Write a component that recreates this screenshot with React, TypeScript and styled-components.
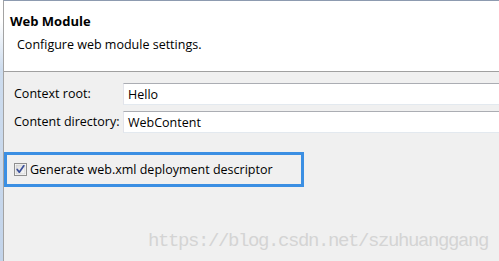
import styled, { createGlobalStyle } from "styled-components";

const GlobalStyle = createGlobalStyle`
  html, body {
    margin: 0;
    padding: 0;
    background: #f0f0f0;
    overflow: hidden;
  }
  * {
    box-sizing: border-box;
  }
`;

const Page = styled.div`
  position: relative;
  display: flex;
  width: 499px;
  height: 261px;
  overflow: hidden;
  font-family: "Open Sans", "Noto Sans", sans-serif;
  font-size: 12.5px;
  color: #000;
`;

const EdgeStrip = styled.div`
  width: 3px;
  flex-shrink: 0;
  background: linear-gradient(to bottom, #ffffff 0, #ffffff 20px, #cddcee 70px, #c3d4ea 100%);
`;

const Panel = styled.div`
  flex: 1;
  display: flex;
  flex-direction: column;
  border-left: 1px solid #a3a3a3;
  border-top: 1px solid #8d9bb0;
  background: #f0f0f0;
`;

const Header = styled.div`
  height: 71px;
  display: flex;
  flex-direction: column;
  padding: 12px 0 0 6px;
  background: #ffffff;
  border-bottom: 1px solid #a0a0a0;
`;

const Title = styled.div`
  font-size: 13px;
  font-weight: 700;
  line-height: 16px;
`;

const Description = styled.div`
  margin-top: 8px;
  padding-left: 7px;
  line-height: 16px;
`;

const Body = styled.div`
  display: flex;
  flex-direction: column;
  padding-top: 11px;
`;

const Form = styled.div`
  display: grid;
  grid-template-columns: 109px 1fr;
  grid-auto-rows: 22px;
  row-gap: 6px;
  padding-left: 10px;
  align-items: center;
`;

const Label = styled.label`
  line-height: 16px;
`;

const TextInput = styled.div`
  height: 22px;
  display: flex;
  align-items: center;
  padding-left: 4px;
  background: #ffffff;
  border-top: 1px solid #abadb3;
  border-left: 1px solid #e2e3ea;
  border-bottom: 1px solid #e3e9ef;
`;

const Highlight = styled.div`
  margin-top: 19px;
  width: 300px;
  height: 35px;
  display: flex;
  align-items: center;
  gap: 3px;
  padding-left: 7px;
  border: 3px solid #3b8fe3;
`;

const Box = styled.svg`
  width: 13px;
  height: 13px;
  flex-shrink: 0;
`;

const Watermark = styled.div`
  position: absolute;
  left: 148px;
  top: 232px;
  font-family: "Liberation Mono", monospace;
  font-size: 19px;
  line-height: 19px;
  letter-spacing: -1.4px;
  color: #d4d4d4;
  white-space: nowrap;
  pointer-events: none;
`;

function CheckBox() {
  return (
    <Box viewBox="0 0 13 13">
      <defs>
        <linearGradient id="cbFill" x1="0" y1="0" x2="1" y2="1">
          <stop offset="0" stopColor="#dcdcdc" />
          <stop offset="1" stopColor="#f8f8f8" />
        </linearGradient>
      </defs>
      <rect x="0.5" y="0.5" width="12" height="12" fill="#ffffff" stroke="#8f8f8f" />
      <rect x="2" y="2" width="9" height="9" fill="url(#cbFill)" stroke="#c4c4c4" strokeWidth="0.6" />
      <path d="M3.2 6.4 L5.3 9.2 L9.8 2.8" fill="none" stroke="#3a4f9a" strokeWidth="1.7" strokeLinecap="round" strokeLinejoin="round" />
    </Box>
  );
}

export default function App() {
  return (
    <>
      <GlobalStyle />
      <Page>
        <EdgeStrip />
        <Panel>
          <Header>
            <Title>Web Module</Title>
            <Description>Configure web module settings.</Description>
          </Header>
          <Body>
            <Form>
              <Label>Context root:</Label>
              <TextInput>Hello</TextInput>
              <Label>Content directory:</Label>
              <TextInput>WebContent</TextInput>
            </Form>
            <Highlight>
              <CheckBox />
              <span>Generate web.xml deployment descriptor</span>
            </Highlight>
          </Body>
        </Panel>
        <Watermark>https://blog.csdn.net/szuhuanggang</Watermark>
      </Page>
    </>
  );
}
